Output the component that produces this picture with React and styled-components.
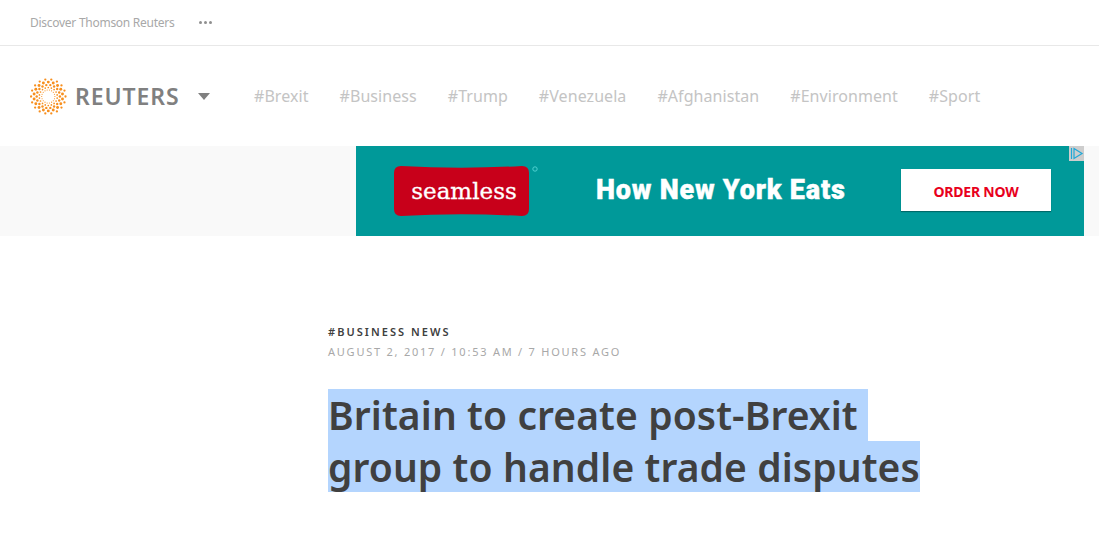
import styled, { createGlobalStyle } from "styled-components";

const GlobalStyle = createGlobalStyle`
  html, body {
    margin: 0;
    padding: 0;
    background: #fff;
    font-family: "Noto Sans", "Open Sans", sans-serif;
  }
`;

const Page = styled.div`
  width: 1099px;
  height: 538px;
  overflow: hidden;
`;

const TopBar = styled.div`
  height: 45px;
  border-bottom: 1px solid #e8e8e8;
  display: flex;
  align-items: center;
  padding-left: 30px;
  gap: 25px;
`;

const TopLink = styled.span`
  font-size: 12px;
  color: #a8a8a8;
  letter-spacing: -0.27px;
`;

const Dots = styled.div`
  display: flex;
  gap: 2px;
  margin-bottom: 1px;
`;

const Dot = styled.i`
  width: 3px;
  height: 3px;
  border-radius: 50%;
  background: #8f8f8f;
`;

const NavBar = styled.div`
  height: 100px;
  display: flex;
  align-items: center;
  padding-left: 30px;
`;

const Brand = styled.div`
  display: flex;
  align-items: center;
  gap: 8px;
  width: 224px;
`;

const Wordmark = styled.span`
  font-size: 23px;
  font-weight: 600;
  color: #808080;
  letter-spacing: 0.9px;
`;

const Caret = styled.i`
  width: 0;
  height: 0;
  margin-left: 11px;
  border-left: 6px solid transparent;
  border-right: 6px solid transparent;
  border-top: 7px solid #808080;
`;

const Tags = styled.div`
  display: flex;
  gap: 31px;
`;

const Tag = styled.a`
  font-size: 16px;
  letter-spacing: 0.06px;
  color: #c4c4c4;
`;

const AdRow = styled.div`
  height: 90px;
  background: #f9f9f9;
  display: flex;
  justify-content: flex-end;
  padding-right: 15px;
`;

const Ad = styled.div`
  position: relative;
  width: 728px;
  height: 90px;
  background: #009999;
  display: flex;
  align-items: center;
  padding-left: 38px;
  box-sizing: border-box;
`;

const Seamless = styled.div`
  position: relative;
  width: 135px;
  height: 50px;
  display: flex;
  align-items: center;
  justify-content: center;
  color: #fff;
  font-family: "DejaVu Serif", "Liberation Serif", serif;
  font-size: 23px;
  -webkit-text-stroke: 0.3px #fff;

  svg {
    position: absolute;
    top: 0;
    left: 0;
    overflow: visible;
  }

  span {
    position: relative;
    margin-left: 5px;
  }
`;

const Headline = styled.div`
  margin-left: 67px;
  margin-top: -2px;
  width: 305px;
  color: #fff;
  font-family: "Roboto", "Liberation Sans", sans-serif;
  font-size: 27px;
  font-weight: 900;
  letter-spacing: 0.8px;
  -webkit-text-stroke: 0.4px #fff;
  white-space: nowrap;
`;

const OrderButton = styled.div`
  width: 150px;
  height: 42px;
  margin-top: -2px;
  padding-top: 2px;
  box-sizing: border-box;
  background: #fff;
  box-shadow: 0 1px 1px rgba(0, 0, 0, 0.3);
  color: #e8001c;
  font-size: 14px;
  font-weight: 700;
  display: flex;
  align-items: center;
  justify-content: center;
  letter-spacing: -0.2px;
`;

const AdBadge = styled.div`
  position: absolute;
  top: 0;
  right: 0;
  width: 15px;
  height: 15px;
  background: #cdcdcd;
  display: flex;
`;

const Article = styled.div`
  padding: 88px 0 0 328px;
`;

const Section = styled.div`
  font-size: 11px;
  font-weight: 600;
  line-height: 15px;
  letter-spacing: 2.05px;
  color: #404040;
`;

const Dateline = styled.div`
  margin-top: 5px;
  font-size: 11px;
  line-height: 15px;
  letter-spacing: 1.77px;
  color: #a8a8a8;
`;

const Title = styled.h1`
  margin: 30px 0 0;
  font-size: 39px;
  font-weight: 600;
  letter-spacing: 0.09px;
  color: #404040;
  white-space: nowrap;
`;

const TitleLine = styled.span`
  display: table;
  height: 51.5px;
  line-height: 51.5px;
  background: #b4d5fe;
  padding-right: ${(props) => props.$trail || 0}px;
`;

function logoDots() {
  const rings = [
    { r: 6.6, s: 0.6 },
    { r: 9, s: 0.85 },
    { r: 11.6, s: 1.2 },
    { r: 14.4, s: 1.45 },
    { r: 17.2, s: 1.15 },
  ];
  const dots = [];
  rings.forEach((ring, i) => {
    for (let k = 0; k < 18; k++) {
      const a = ((k + (i % 2) / 2) / 18) * Math.PI * 2;
      dots.push(
        <circle
          key={`${i}-${k}`}
          cx={18.3 + ring.r * Math.cos(a)}
          cy={18.5 + ring.r * Math.sin(a)}
          r={ring.s}
        />
      );
    }
  });
  return dots;
}

function Logo() {
  return (
    <svg width="37" height="37" viewBox="0 0 37 37" fill="#f78f1e">
      {logoDots()}
    </svg>
  );
}

const tags = ["Brexit", "Business", "Trump", "Venezuela", "Afghanistan", "Environment", "Sport"];

export default function App() {
  return (
    <Page>
      <GlobalStyle />
      <TopBar>
        <TopLink>Discover Thomson Reuters</TopLink>
        <Dots>
          <Dot />
          <Dot />
          <Dot />
        </Dots>
      </TopBar>
      <NavBar>
        <Brand>
          <Logo />
          <Wordmark>REUTERS</Wordmark>
          <Caret />
        </Brand>
        <Tags>
          {tags.map((tag) => (
            <Tag key={tag}>#{tag}</Tag>
          ))}
        </Tags>
      </NavBar>
      <AdRow>
        <Ad>
          <Seamless>
            <svg width="135" height="50" viewBox="0 0 135 50">
              <path
                d="M7 0Q67 3.5 128 0Q135 0 135 7V43Q135 50 128 50Q67 46.5 7 50Q0 50 0 43V7Q0 0 7 0Z"
                fill="#c8001a"
              />
              <circle cx="141" cy="3" r="2.2" fill="none" stroke="#4fd0d0" strokeWidth="1" />
            </svg>
            <span>seamless</span>
          </Seamless>
          <Headline>How New York Eats</Headline>
          <OrderButton>ORDER NOW</OrderButton>
          <AdBadge>
            <svg width="15" height="15" viewBox="0 0 15 15" fill="none" stroke="#1fa8d8" strokeWidth="1.2">
              <path d="M2.5 2v11M5 2.5l8 5-8 5z" />
            </svg>
          </AdBadge>
        </Ad>
      </AdRow>
      <Article>
        <Section>#BUSINESS NEWS</Section>
        <Dateline>AUGUST 2, 2017 / 10:53 AM / 7 HOURS AGO</Dateline>
        <Title>
          <TitleLine $trail={10}>Britain to create post-Brexit</TitleLine>
          <TitleLine>group to handle trade disputes</TitleLine>
        </Title>
      </Article>
    </Page>
  );
}
